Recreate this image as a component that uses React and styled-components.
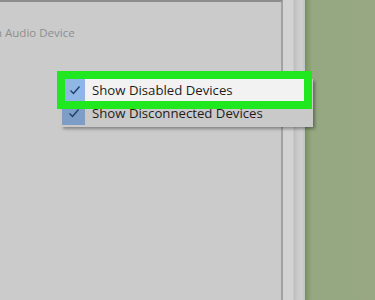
import React from 'react';
import styled, { createGlobalStyle } from 'styled-components';

const GlobalStyle = createGlobalStyle`
  html, body {
    margin: 0;
    padding: 0;
    background: #97a883;
  }
  body {
    font-family: "Open Sans", "Noto Sans", sans-serif;
  }
`;

const Screen = styled.div`
  position: relative;
  width: 375px;
  height: 300px;
  display: flex;
  overflow: hidden;
`;

const Panel = styled.div`
  width: 283px;
  flex-shrink: 0;
  background: #cbcbcb;
  border-top: 2px solid #8c8c8c;
  border-right: 2px solid #a2a2a2;
  box-sizing: border-box;
  padding-top: 23px;
`;

const DeviceName = styled.div`
  margin-left: -5px;
  font-size: 11.5px;
  color: #8e8e8e;
  white-space: nowrap;
`;

const Strip = styled.div`
  width: 22px;
  flex-shrink: 0;
  background: linear-gradient(to right, #d3d3d3 0, #d3d3d3 10px, #bdbdbd 11px, #c9c9c9 14px, #d0d0d0 19px, #c4c4c4 21px);
  border-right: 1px solid #6f88a8;
`;

const Desktop = styled.div`
  flex: 1;
  background: linear-gradient(to right, #7f9468 0, #95a882 6px, #97a883 100%);
`;

const Menu = styled.div`
  position: absolute;
  left: 61px;
  top: 79px;
  width: 252px;
  background: #c9c9c9;
  box-shadow: 2px 2px 3px rgba(0, 0, 0, 0.35);
  padding-bottom: 2px;
`;

const Item = styled.div`
  display: flex;
  align-items: stretch;
  height: ${p => (p.$highlighted ? '22px' : '24px')};
  margin: ${p => (p.$highlighted ? '0 9px 0 4px' : '0 0 0 1px')};
  outline: ${p => (p.$highlighted ? '8px solid #1fe81f' : 'none')};
  position: relative;
  z-index: ${p => (p.$highlighted ? 1 : 0)};
`;

const CheckCell = styled.div`
  width: ${p => (p.$highlighted ? '20px' : '23px')};
  display: flex;
  align-items: center;
  justify-content: center;
  background: ${p => (p.$highlighted ? '#8fb7e6' : '#7d9dc6')};
  color: #1d3f6e;
`;

const Label = styled.div`
  flex: 1;
  display: flex;
  align-items: center;
  padding-left: 7px;
  font-size: 13.2px;
  color: #1c1c1c;
  white-space: nowrap;
  background: ${p => (p.$highlighted ? '#f2f2f2' : 'transparent')};
`;

const Check = () => (
  <svg width="12" height="10" viewBox="0 0 12 10">
    <path d="M1.5 5.5 L4.5 8.5 L10.5 1.5" fill="none" stroke="currentColor" strokeWidth="1.4" />
  </svg>
);

const MenuItem = ({ label, highlighted }) => (
  <Item $highlighted={highlighted}>
    <CheckCell $highlighted={highlighted}>
      <Check />
    </CheckCell>
    <Label $highlighted={highlighted}>{label}</Label>
  </Item>
);

export default function App() {
  return (
    <>
      <GlobalStyle />
      <Screen>
        <Panel>
          <DeviceName>n Audio Device</DeviceName>
        </Panel>
        <Strip />
        <Desktop />
        <Menu>
          <MenuItem label="Show Disabled Devices" highlighted />
          <MenuItem label="Show Disconnected Devices" />
        </Menu>
      </Screen>
    </>
  );
}
